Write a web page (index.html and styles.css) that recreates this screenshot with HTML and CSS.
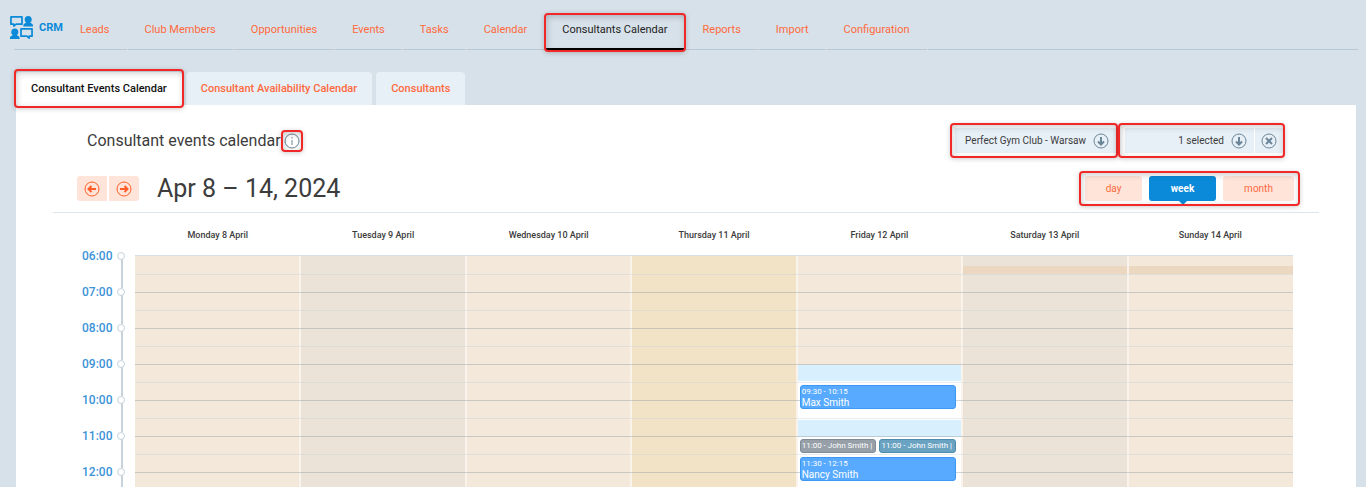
FILE: index.html
```html
<!DOCTYPE html>
<html lang="en">
<head>
    <meta charset="UTF-8">
    <meta name="viewport" content="width=device-width, initial-scale=1.0">
    <title>CRM - Consultants Calendar</title>
    <link rel="stylesheet" href="styles.css">
</head>
<body>
    <header class="top-nav">
        <div class="brand">
            <svg class="brand-icon" viewBox="0 0 24 24" fill="none" stroke="#0a8ad8" stroke-width="1.8" stroke-linejoin="round">
                <path d="M1 1h11.500v7.500H6.500L4 10.500v-2H1z"/>
                <path d="M11.500 13.500H23v7.500h-3v2l-2.500-2h-6z"/>
                <g fill="#0a8ad8" stroke="none">
                    <path d="M19 0c2.300 0 3.700 1.500 3.700 3.700 0 1.400-.6 2.500-1.500 3.200.1 1 2.800.9 2.800 3.100v1H14v-1c0-2.200 2.700-2.100 2.800-3.100-.9-.7-1.500-1.800-1.500-3.200C15.300 1.500 16.700 0 19 0z"/>
                    <path d="M5 13c2.300 0 3.700 1.500 3.700 3.700 0 1.400-.6 2.500-1.500 3.200.1 1 2.800.9 2.800 3.100v1H0v-1c0-2.200 2.700-2.100 2.800-3.100-.9-.7-1.500-1.800-1.500-3.200C1.300 14.500 2.700 13 5 13z"/>
                </g>
            </svg>
            <span>CRM</span>
        </div>
        <nav>
            <a href="#">Leads</a>
            <a href="#">Club Members</a>
            <a href="#">Opportunities</a>
            <a href="#">Events</a>
            <a href="#">Tasks</a>
            <a href="#">Calendar</a>
            <a href="#" class="active highlight">Consultants Calendar</a>
            <a href="#">Reports</a>
            <a href="#">Import</a>
            <a href="#">Configuration</a>
        </nav>
    </header>

    <div class="tabs">
        <a href="#" class="active highlight">Consultant Events Calendar</a>
        <a href="#">Consultant Availability Calendar</a>
        <a href="#">Consultants</a>
    </div>

    <main class="panel">
        <div class="title-row">
            <h1>Consultant events calendar</h1>
            <button type="button" class="info highlight" aria-label="Information">
                <svg class="icon" viewBox="0 0 16 16"><circle cx="8" cy="8" r="7"/><path d="M8 7v5M8 4v1.500"/></svg>
            </button>
            <div class="filters">
                <div class="filter highlight">
                    <label class="field">
                        <select class="club-select" aria-label="Club">
                            <option>Perfect Gym Club - Warsaw</option>
                        </select>
                        <svg class="icon" viewBox="0 0 16 16"><circle cx="8" cy="8" r="7"/><path class="bold" d="M8 4v7M5 8.500l3 3 3-3"/></svg>
                    </label>
                </div>
                <div class="filter highlight">
                    <label class="field">
                        <select class="consultant-select" aria-label="Consultants">
                            <option>1 selected</option>
                        </select>
                        <svg class="icon" viewBox="0 0 16 16"><circle cx="8" cy="8" r="7"/><path class="bold" d="M8 4v7M5 8.500l3 3 3-3"/></svg>
                    </label>
                    <button type="button" class="clear" aria-label="Clear">
                        <svg class="icon" viewBox="0 0 16 16"><circle cx="8" cy="8" r="7"/><path class="bold" d="M5 5l6 6M11 5l-6 6"/></svg>
                    </button>
                </div>
            </div>
        </div>

        <div class="toolbar">
            <div class="arrows">
                <button type="button" aria-label="Previous week">
                    <svg class="icon" viewBox="0 0 16 16"><circle cx="8" cy="8" r="7"/><path class="bold" d="M12 8H5M7.500 5l-3 3 3 3"/></svg>
                </button>
                <button type="button" aria-label="Next week">
                    <svg class="icon" viewBox="0 0 16 16"><circle cx="8" cy="8" r="7"/><path class="bold" d="M4 8h7M8.500 5l3 3-3 3"/></svg>
                </button>
            </div>
            <h2>Apr 8 – 14, 2024</h2>
            <div class="views highlight">
                <button type="button" class="day-view">day</button>
                <button type="button" class="week-view active">week</button>
                <button type="button" class="month-view">month</button>
            </div>
        </div>

        <div class="day-names">
            <span>Monday 8 April</span>
            <span>Tuesday 9 April</span>
            <span>Wednesday 10 April</span>
            <span>Thursday 11 April</span>
            <span>Friday 12 April</span>
            <span>Saturday 13 April</span>
            <span>Sunday 14 April</span>
        </div>

        <div class="calendar">
            <div class="hours">
                <span>06:00</span>
                <span>07:00</span>
                <span>08:00</span>
                <span>09:00</span>
                <span>10:00</span>
                <span>11:00</span>
                <span>12:00</span>
            </div>
            <div class="days">
                <div class="day"></div>
                <div class="day grey"></div>
                <div class="day"></div>
                <div class="day today"></div>
                <div class="day">
                    <div class="slot free" style="top: 109px; height: 16px"></div>
                    <div class="slot open" style="top: 125px; height: 39px"></div>
                    <div class="slot free" style="top: 164px; height: 17px"></div>
                    <div class="slot open" style="top: 181px; height: 71px"></div>
                    <div class="event" style="top: 129px; height: 24px">
                        <span>09:30 - 10:15</span>
                        <strong>Max Smith</strong>
                    </div>
                    <div class="event short busy" style="top: 183px; height: 14px">11:00 - John Smith |</div>
                    <div class="event short call" style="top: 183px; height: 14px">11:00 - John Smith |</div>
                    <div class="event" style="top: 201px; height: 24px">
                        <span>11:30 - 12:15</span>
                        <strong>Nancy Smith</strong>
                    </div>
                </div>
                <div class="day grey">
                    <div class="slot shift" style="top: 10px; height: 8px"></div>
                </div>
                <div class="day">
                    <div class="slot shift" style="top: 10px; height: 8px"></div>
                </div>
            </div>
        </div>
    </main>
</body>
</html>
```

FILE: styles.css
```css
/* Global Styles */
* {
    box-sizing: border-box;
}

body {
    display: flex;
    flex-direction: column;
    height: 100vh;
    margin: 0;
    overflow: hidden;
    background: #d7e1e9;
    color: #3c3c3c;
    font-family: Roboto, sans-serif;
    font-size: 11px;
}

a {
    color: #ff6a3d;
    text-decoration: none;
}

button,
select {
    margin: 0;
    padding: 0;
    border: none;
    background: none;
    font-family: inherit;
    cursor: pointer;
}

.icon {
    display: block;
    width: 16px;
    height: 16px;
    fill: none;
    stroke: #6b8599;
    stroke-width: 1;
}

.icon .bold {
    stroke-width: 2;
}

/* Red frame around the parts that the guide explains */
.highlight {
    position: relative;
}

.highlight::after {
    content: "";
    position: absolute;
    inset: 0;
    z-index: 5;
    border: 2px solid #f02828;
    border-radius: 4px;
    box-shadow: 0 1px 5px rgba(0, 0, 0, 0.2), inset 1px 2px 6px rgba(0, 0, 0, 0.2);
    pointer-events: none;
}

/* Top navigation */
.top-nav {
    display: flex;
    margin: 13px 8px 0 14px;
}

.brand {
    display: flex;
    align-items: center;
    gap: 6px;
    height: 37px;
    padding-bottom: 7px;
    border-bottom: 1px solid #b9c8d5;
    color: #0a8ad8;
    font-weight: bold;
}

.brand-icon {
    width: 23px;
    height: 23px;
    margin-left: -4px;
}

.top-nav nav {
    display: flex;
    flex: 1;
    gap: 1px;
}

.top-nav nav::after {
    content: "";
    flex: 1;
    border-bottom: 1px solid #b9c8d5;
}

.top-nav a {
    height: 37px;
    padding: 0 17px;
    border-bottom: 1px solid #b9c8d5;
    line-height: 33px;
}

.top-nav a.active {
    border-bottom: 2px solid #000;
    color: #222;
}

.top-nav .highlight::after {
    inset: 0 -1px -4px;
}

/* Tabs */
.tabs {
    display: flex;
    gap: 4px;
    margin: 22px 16px 0;
}

.tabs a {
    padding: 0 15px;
    border-radius: 4px 4px 0 0;
    background: #e7eff7;
    font-weight: 500;
    line-height: 33px;
}

.tabs a.active {
    background: #fff;
    color: #111;
}

.tabs .highlight::after {
    inset: -3px -2px;
}

/* Panel */
.panel {
    display: flex;
    flex: 1;
    flex-direction: column;
    min-height: 0;
    margin: 0 10px 0 16px;
    padding: 18px 37px 0;
    background: #fff;
}

.title-row {
    display: flex;
    align-items: center;
    padding: 0 34px;
}

h1,
h2 {
    margin: 0;
    font-weight: normal;
}

h1 {
    font-size: 16px;
}

.info {
    padding: 3px;
}

.filters {
    display: flex;
    margin-left: auto;
}

.filter {
    display: flex;
    gap: 1px;
    height: 35px;
    padding: 5px 2px 5px 5px;
}

.filter + .filter {
    padding-left: 7px;
}

.field {
    display: flex;
    align-items: center;
    padding: 0 7px;
    background: #e7eff7;
}

.field select {
    appearance: none;
    margin-right: 7px;
    color: #3c3c3c;
    font-size: 10px;
    text-align-last: right;
}

.club-select {
    width: 124px;
}

.consultant-select {
    width: 92px;
}

.clear {
    padding: 0 6px;
    background: #e7eff7;
}

.toolbar {
    display: flex;
    align-items: center;
    margin-top: 13px;
    padding: 0 19px 6px 24px;
    border-bottom: 1px solid #dde4ea;
}

.arrows {
    display: flex;
    gap: 2px;
}

.arrows button {
    height: 25px;
    padding: 0 7px;
    border-radius: 3px 0 0 3px;
    background: #ffe4da;
}

.arrows button + button {
    border-radius: 0 3px 3px 0;
}

.arrows .icon {
    stroke: #ff5c28;
}

h2 {
    margin-left: 18px;
    font-size: 25px;
    line-height: 30px;
}

.views {
    display: flex;
    gap: 7px;
    margin-left: auto;
    padding: 5px 6px;
}

.views button {
    height: 25px;
    border-radius: 3px;
    background: #ffe4da;
    color: #ff6a3d;
    font-size: 10px;
}

.day-view {
    width: 57px;
}

.week-view {
    width: 67px;
}

.month-view {
    width: 71px;
}

.views button.active {
    position: relative;
    background: #0a8ad8;
    color: #fff;
    font-weight: bold;
}

.views button.active::after {
    content: "";
    position: absolute;
    top: 100%;
    left: 50%;
    margin-left: -4px;
    border: 4px solid transparent;
    border-top-color: #0a8ad8;
    border-bottom: none;
}

/* Calendar */
.day-names {
    display: grid;
    grid-template-columns: repeat(7, 1fr);
    padding: 3px 26px 1px 82px;
    font-size: 9px;
    font-weight: 500;
    line-height: 38px;
    text-align: center;
}

.calendar {
    display: flex;
    flex: 1;
    min-height: 0;
    margin-top: -8px;
    padding: 8px 26px 0 0;
    overflow: hidden;
}

.hours {
    width: 82px;
    margin-top: -8px;
    color: #3d93d8;
    font-size: 12px;
    font-weight: 500;
    line-height: 18px;
}

.hours span {
    display: block;
    position: relative;
    height: 36px;
    padding-left: 29px;
}

.hours span::before {
    content: "";
    position: absolute;
    top: 11px;
    right: 12px;
    width: 2px;
    height: 30px;
    background: #c6d2dc;
}

.hours span::after {
    content: "";
    position: absolute;
    top: 5px;
    right: 10px;
    width: 6px;
    height: 6px;
    border: 1px solid #c6d2dc;
    border-radius: 50%;
    background: #fff;
}

.days {
    display: grid;
    position: relative;
    flex: 1;
    grid-template-columns: repeat(7, 1fr);
    height: 252px;
    border-top: 1px solid #d5dfe8;
}

/* Hour and half-hour lines */
.days::after {
    content: "";
    position: absolute;
    inset: 1px 0 0;
    z-index: 1;
    background: repeating-linear-gradient(transparent 0 17px, rgba(190, 205, 215, 0.35) 17px 18px, transparent 18px 35px, rgba(150, 160, 165, 0.45) 35px 36px);
    pointer-events: none;
}

.day {
    position: relative;
    border: solid #f9f3ec;
    border-width: 0 1px;
    background: #f4e8da;
}

.day.grey {
    background: #ebe3d8;
}

.day.today {
    background: #f3e3c6;
}

.day:first-child {
    border-left: none;
}

.day:last-child {
    border-right: none;
}

.slot {
    position: absolute;
    right: 0;
    left: 0;
}

.free {
    background: #d8effd;
}

.open {
    background: #fff;
}

.shift {
    background: #ecd8c0;
}

.event {
    display: flex;
    position: absolute;
    right: 5px;
    left: 2px;
    z-index: 2;
    flex-direction: column;
    padding: 0 1px;
    border: 1px solid #3d97f5;
    border-radius: 3px;
    background: #57aaff;
    color: #fff;
    font-size: 8px;
    line-height: 11px;
    overflow: hidden;
}

.event strong {
    font-size: 10px;
    font-weight: normal;
}

.event.short {
    display: block;
    white-space: nowrap;
}

.event.busy {
    right: 52%;
    border-color: #7f8b97;
    background: #979fa9;
}

.event.call {
    left: 50%;
    border-color: #4d8cab;
    background: #6aa3c2;
}
```
